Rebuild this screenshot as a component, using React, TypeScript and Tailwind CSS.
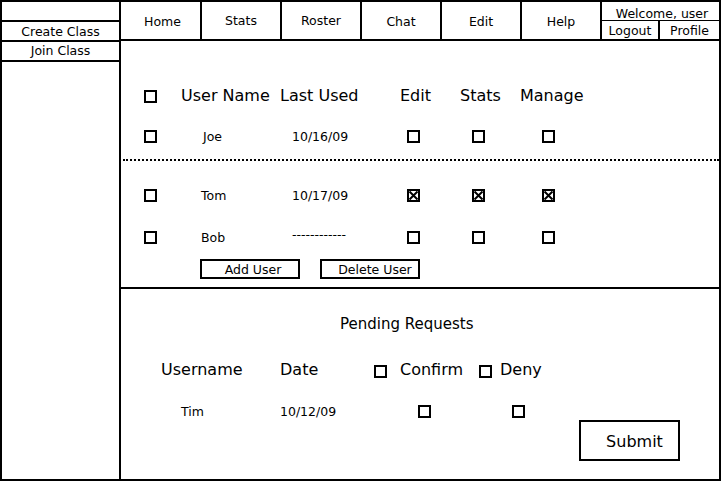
import React from 'react'

function Box({ checked = false }: { checked?: boolean }) {
  if (checked) {
    return (
      <svg width="13" height="13" viewBox="0 0 13 13" className="block shrink-0">
        <rect x="1" y="1" width="11" height="11" fill="white" stroke="black" strokeWidth="2" />
        <path d="M2.5 2.5L10.5 10.5M10.5 2.5L2.5 10.5" stroke="black" strokeWidth="2" />
      </svg>
    )
  }
  return <span className="block w-[13px] h-[13px] border-2 border-black shrink-0" />
}

const navItems = ['Home', 'Stats', 'Roster', 'Chat', 'Edit', 'Help']

type Row = { name: string; date: string; perms: boolean[] }

const rows: Row[] = [
  { name: 'Tom', date: '10/17/09', perms: [true, true, true] },
  { name: 'Bob', date: '------------', perms: [false, false, false] },
]

function UserRow({ row, className = '' }: { row: Row; className?: string }) {
  const dashed = row.date.startsWith('-')
  return (
    <div className={`flex items-center h-[20px] pl-[23px] text-[12.5px] ${className}`}>
      <div className="w-[57px]"><Box /></div>
      <div className="w-[91px] pt-[2px]">{row.name}</div>
      <div className={`w-[115px] ${dashed ? 'pb-[3px]' : 'pt-[2px]'}`}>{row.date}</div>
      <div className="w-[65px]"><Box checked={row.perms[0]} /></div>
      <div className="w-[70px]"><Box checked={row.perms[1]} /></div>
      <Box checked={row.perms[2]} />
    </div>
  )
}

export default function App() {
  return (
    <div className="w-[721px] h-[481px] border-2 border-black flex bg-white text-black font-['DejaVu_Sans',sans-serif] leading-none">
      {/* sidebar */}
      <aside className="w-[119px] shrink-0 border-r-2 border-black flex flex-col text-[12.5px]">
        <div className="h-[20px] border-b-2 border-black" />
        <div className="h-[20px] border-b-2 border-black flex items-center justify-center pt-[2px]">Create Class</div>
        <div className="h-[20px] border-b-2 border-black flex items-center justify-center pt-[1px]">Join Class</div>
      </aside>

      <div className="flex-1 flex flex-col min-w-0">
        {/* top bar */}
        <div className="h-[39px] shrink-0 border-b-2 border-black flex text-[12.5px]">
          {navItems.map((item, i) => (
            <div
              key={item}
              className={`${i === 0 ? 'w-[81px] pt-[3px] pl-[4px]' : 'w-[80px] pt-[1px]'} ${i >= 3 ? 'pt-[3px]' : ''} border-r-2 border-black flex items-center justify-center`}
            >
              {item}
            </div>
          ))}
          <div className="flex-1 flex flex-col">
            <div className="h-[19px] border-b border-black flex items-end justify-center pl-[3px]">Welcome, user</div>
            <div className="flex-1 flex">
              <div className="w-[58px] border-r-2 border-black flex items-center justify-center pt-[3px]">Logout</div>
              <div className="flex-1 flex items-center justify-center pt-[3px]">Profile</div>
            </div>
          </div>
        </div>

        {/* users */}
        <section className="h-[248px] shrink-0 border-b-2 border-black flex flex-col pt-[45px]">
          <div className="flex items-center h-[20px] pl-[23px] text-[16px]">
            <div className="w-[37px]"><Box /></div>
            <div className="w-[99px]">User Name</div>
            <div className="w-[120px]">Last Used</div>
            <div className="w-[60px]">Edit</div>
            <div className="w-[60px]">Stats</div>
            <div>Manage</div>
          </div>

          <UserRow row={{ name: 'Joe', date: '10/16/09', perms: [false, false, false] }} className="mt-[20px] [&>div:nth-child(2)]:pl-[2px]" />

          <div className="mt-[13px] ml-[2px] border-t-2 border-dotted border-black" />

          <UserRow row={rows[0]} className="mt-[24px]" />
          <UserRow row={rows[1]} className="mt-[22px]" />

          <div className="flex gap-[20px] mt-[12px] pl-[79px] text-[12.5px]">
            <button className="w-[100px] h-[20px] border-2 border-black flex items-center justify-center pl-[6px] pt-[2px]">Add User</button>
            <button className="w-[100px] h-[20px] border-2 border-black flex items-center justify-center pl-[10px] pt-[2px]">Delete User</button>
          </div>
        </section>

        {/* pending requests */}
        <section className="flex-1 flex flex-col pt-[25px]">
          <div className="h-[20px] flex items-center pl-[219px] text-[15px]">Pending Requests</div>

          <div className="flex items-center h-[20px] mt-[26px] pl-[40px] text-[16px]">
            <div className="w-[119px]">Username</div>
            <div className="w-[94px]">Date</div>
            <div className="w-[26px] pt-[2px]"><Box /></div>
            <div className="w-[79px]">Confirm</div>
            <div className="w-[21px] pt-[2px]"><Box /></div>
            <div>Deny</div>
          </div>

          <div className="flex items-start mt-[21px] pl-[60px]">
            <div className="flex items-center h-[20px] text-[12.5px]">
              <div className="w-[99px] pt-[2px]">Tim</div>
              <div className="w-[138px] pt-[2px]">10/12/09</div>
              <div className="w-[94px]"><Box /></div>
              <div className="w-[67px]"><Box /></div>
            </div>
            <button className="mt-[19px] w-[101px] h-[41px] border-2 border-black flex items-center justify-center pl-[10px] pt-[3px] text-[16px]">
              Submit
            </button>
          </div>
        </section>
      </div>
    </div>
  )
}
